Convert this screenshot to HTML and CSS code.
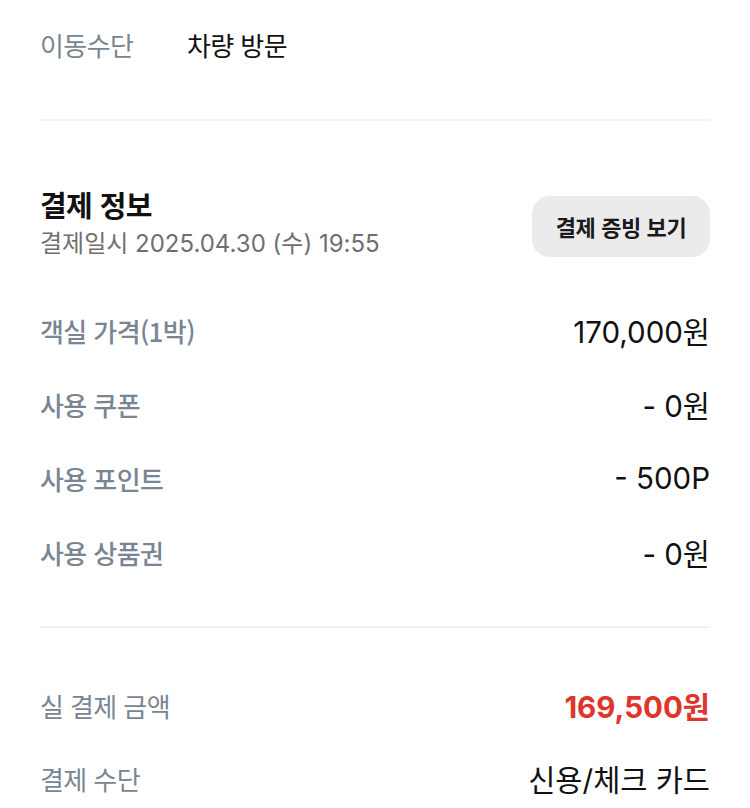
FILE: index.html
```html
<!DOCTYPE html>
<html lang="ko">
<head>
<meta charset="utf-8">
<link rel="stylesheet" href="styles.css">
</head>
<body>
<main class="page">
  <div class="row row-top">
    <span class="label label-fixed">이동수단</span>
    <span class="value value-plain">차량 방문</span>
  </div>
  <hr class="divider divider-top">
  <section class="pay-header">
    <div class="pay-title-wrap">
      <h2 class="pay-title">결제 정보</h2>
      <p class="pay-date">결제일시 2025.04.30 (수) 19:55</p>
    </div>
    <button class="receipt-btn" type="button">결제 증빙 보기</button>
  </section>
  <div class="rows">
    <div class="row row-split"><span class="label">객실 가격(1박)</span><span class="value">170,000원</span></div>
    <div class="row row-split"><span class="label">사용 쿠폰</span><span class="value">- 0원</span></div>
    <div class="row row-split"><span class="label">사용 포인트</span><span class="value">- 500P</span></div>
    <div class="row row-split"><span class="label">사용 상품권</span><span class="value">- 0원</span></div>
  </div>
  <hr class="divider divider-mid">
  <div class="rows rows-total">
    <div class="row row-split"><span class="label label-light">실 결제 금액</span><span class="value value-total">169,500원</span></div>
    <div class="row row-split row-last"><span class="label label-light">결제 수단</span><span class="value">신용/체크 카드</span></div>
  </div>
</main>
</body>
</html>
```

FILE: styles.css
```css
* { box-sizing: border-box; }
html, body {
  margin: 0;
  padding: 0;
  background: #ffffff;
}
body {
  font-family: "Noto Sans CJK KR", "Noto Sans", sans-serif;
  color: #111111;
}
.page {
  width: 750px;
  height: 808px;
  overflow: hidden;
  padding: 7px 40px 0 40px;
}
.row {
  display: flex;
  align-items: center;
  height: 74px;
  font-size: 26px;
  letter-spacing: -0.6px;
}
.row-split {
  justify-content: space-between;
}
.label {
  color: #7a8593;
  font-weight: 500;
}
.label-light {
  font-weight: 400;
}
.label-fixed {
  width: 147px;
  font-weight: 400;
}
.value {
  font-family: "Inter", "Noto Sans CJK KR", sans-serif;
  font-size: 29.5px;
  letter-spacing: 0;
  color: #111111;
  font-weight: 400;
}
.value-plain {
  font-family: "Noto Sans CJK KR", sans-serif;
  font-size: 26px;
  letter-spacing: -0.6px;
}
.value-total {
  color: #e0352b;
  font-weight: 700;
}
.divider {
  border: 0;
  height: 2px;
  background: #f2f2f2;
  margin: 0;
}
.divider-top {
  margin-top: 38px;
}
.pay-header {
  display: flex;
  justify-content: space-between;
  align-items: center;
  margin-top: 64px;
}
.pay-title {
  margin: 0;
  font-size: 29px;
  line-height: 38px;
  font-weight: 700;
  letter-spacing: -0.6px;
  color: #111111;
}
.pay-date {
  margin: 4px 0 0 0;
  font-family: "Inter", "Noto Sans CJK KR", sans-serif;
  font-size: 24px;
  line-height: 34px;
  color: #6f6f6f;
  letter-spacing: 0;
}
.receipt-btn {
  width: 178px;
  height: 61px;
  border: 0;
  border-radius: 18px;
  background: #ebebeb;
  font-family: inherit;
  font-size: 22px;
  font-weight: 700;
  letter-spacing: -0.4px;
  color: #1a1a1a;
  padding: 0;
  margin-top: 6px;
}
.rows {
  margin-top: 32px;
}
.divider-mid {
  margin-top: 37px;
}
.rows-total {
  margin-top: 40px;
}
.row-last {
  height: 72px;
}
```
